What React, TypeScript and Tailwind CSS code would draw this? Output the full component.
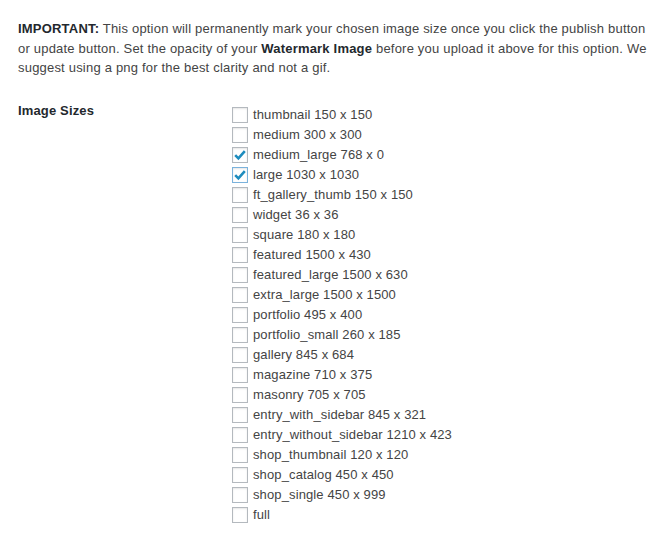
import React from "react";

const sizes: { label: string; checked?: boolean; focus?: boolean }[] = [
  { label: "thumbnail 150 x 150" },
  { label: "medium 300 x 300" },
  { label: "medium_large 768 x 0", checked: true },
  { label: "large 1030 x 1030", checked: true, focus: true },
  { label: "ft_gallery_thumb 150 x 150" },
  { label: "widget 36 x 36" },
  { label: "square 180 x 180" },
  { label: "featured 1500 x 430" },
  { label: "featured_large 1500 x 630" },
  { label: "extra_large 1500 x 1500" },
  { label: "portfolio 495 x 400" },
  { label: "portfolio_small 260 x 185" },
  { label: "gallery 845 x 684" },
  { label: "magazine 710 x 375" },
  { label: "masonry 705 x 705" },
  { label: "entry_with_sidebar 845 x 321" },
  { label: "entry_without_sidebar 1210 x 423" },
  { label: "shop_thumbnail 120 x 120" },
  { label: "shop_catalog 450 x 450" },
  { label: "shop_single 450 x 999" },
  { label: "full" },
];

function Box({ checked, focus }: { checked?: boolean; focus?: boolean }) {
  return (
    <span
      className={
        "flex h-[16px] w-[16px] shrink-0 items-center justify-center bg-white shadow-[inset_0_1px_2px_rgba(0,0,0,0.1)] border " +
        (focus ? "border-[#7ab2dc]" : "border-[#b4b9be]")
      }
    >
      {checked && (
        <svg width="14" height="14" viewBox="0 0 14 14">
          <path
            d="M2.2 7.2 L5.4 10.4 L11.8 3.2"
            fill="none"
            stroke="#1e8cbe"
            strokeWidth="2.6"
            strokeLinecap="butt"
            strokeLinejoin="miter"
          />
        </svg>
      )}
    </span>
  );
}

export default function App() {
  return (
    <div
      className="min-h-[538px] w-[667px] bg-white pl-[18px] pt-[19px] text-[13px] text-[#444]"
      style={{ fontFamily: '"Liberation Sans", Arial, Helvetica, sans-serif' }}
    >
      <p className="w-[640px] leading-[19.5px] tracking-[0.2px]">
        <strong className="font-bold text-[#23282d]">IMPORTANT:</strong> This option will permanently mark your
        chosen image size once you click the publish button or update button. Set the opacity of your{" "}
        <strong className="font-bold text-[#23282d]">Watermark Image</strong> before you upload it above for this
        option. We suggest using a png for the best clarity and not a gif.
      </p>
      <div className="mt-[23px] flex">
        <div className="w-[214px] shrink-0 font-bold leading-[20px] tracking-[0.15px] text-[#23282d]">Image Sizes</div>
        <div className="flex flex-col pt-[4px]">
          {sizes.map((s) => (
            <label key={s.label} className="flex h-[20px] items-center gap-[5px] leading-[20px] tracking-[0.12px]">
              <Box checked={s.checked} focus={s.focus} />
              <span>{s.label}</span>
            </label>
          ))}
        </div>
      </div>
    </div>
  );
}
